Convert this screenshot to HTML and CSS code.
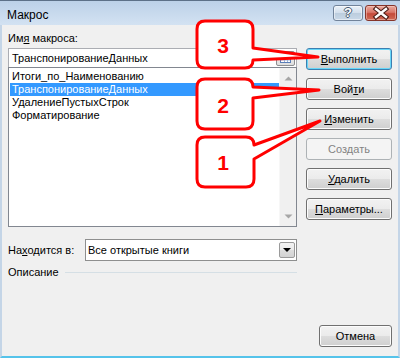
FILE: index.html
```html
<!DOCTYPE html>
<html lang="ru">
<head>
<meta charset="utf-8">
<title>Макрос</title>
<link rel="stylesheet" href="styles.css">
</head>
<body>
<div class="window">
  <div class="titlebar">
    <span class="title">Макрос</span>
    <div class="caption-btns">
      <span class="cbtn help">?</span>
      <span class="cbtn close">
        <svg width="32" height="16" viewBox="0 0 32 16">
          <path d="M11 4 L21 12 M21 4 L11 12" stroke="#4a1d17" stroke-width="4.6" stroke-linecap="square" fill="none"/>
          <path d="M11 4 L21 12 M21 4 L11 12" stroke="#ffffff" stroke-width="2.4" stroke-linecap="square" fill="none"/>
        </svg>
      </span>
    </div>
  </div>
  <div class="client">
    <div class="main">
      <div class="left">
        <div class="label">Им<u>я</u> макроса:</div>
        <div class="namebox">
          <span>ТранспонированиеДанных</span>
          <span class="refedit">
            <svg width="17" height="13" viewBox="0 0 17 13">
              <rect x="3.5" y="3.5" width="10" height="7" fill="#ffffff" stroke="#5a7fb8"/>
              <rect x="4" y="4" width="9" height="2" fill="#4d7cc4"/>
              <path d="M4 8 H13 M7.5 6 V10 M10.5 6 V10" stroke="#9fb4d6" stroke-width="1"/>
            </svg>
          </span>
        </div>
        <div class="list">
          <div class="items">
            <div class="item">Итоги_по_Наименованию</div>
            <div class="item sel">ТранспонированиеДанных</div>
            <div class="item">УдалениеПустыхСтрок</div>
            <div class="item">Форматирование</div>
          </div>
          <div class="vscroll">
            <svg width="9" height="5" viewBox="0 0 9 5"><path d="M0.5 4.5 L4.5 0.5 L8.5 4.5 Z" fill="#a6a6a6"/></svg>
            <svg width="9" height="5" viewBox="0 0 9 5"><path d="M0.5 0.5 L4.5 4.5 L8.5 0.5 Z" fill="#a6a6a6"/></svg>
          </div>
        </div>
        <div class="where">
          <span class="where-label">На<u>х</u>одится в:</span>
          <div class="combo">
            <span>Все открытые книги</span>
            <span class="dd">
              <svg width="8" height="4" viewBox="0 0 8 4"><path d="M0 0 H8 L4 4 Z" fill="#000000"/></svg>
            </span>
          </div>
        </div>
        <div class="desc">
          <span>Описание</span>
          <span class="rule"></span>
        </div>
      </div>
      <div class="buttons">
        <button class="btn default"><u>В</u>ыполнить</button>
        <button class="btn">Вой<u>т</u>и</button>
        <button class="btn"><u>И</u>зменить</button>
        <button class="btn disabled">Создать</button>
        <button class="btn"><u>У</u>далить</button>
        <button class="btn"><u>П</u>араметры...</button>
      </div>
    </div>
    <div class="footer">
      <button class="btn cancel">Отмена</button>
    </div>
  </div>

  <svg class="callouts" width="400" height="358" viewBox="0 0 400 358">
    <g fill="#ffffff" stroke="#ff0000" stroke-width="3" stroke-linejoin="round">
      <path d="M205 21 H245 Q253 21 253 29 V48 L318 57 L253 60 Q253 68 245 68 H205 Q197 68 197 60 V29 Q197 21 205 21 Z"/>
      <path d="M205 79 H245 Q253 79 253 87 L319 90 L253 98 V121 Q253 129 245 129 H205 Q197 129 197 121 V87 Q197 79 205 79 Z"/>
      <path d="M205 137 H246 Q254 137 254 145 L320 121 L254 159 V179 Q254 187 246 187 H205 Q197 187 197 179 V145 Q197 137 205 137 Z"/>
    </g>
    <g class="num" fill="#ff0000" text-anchor="middle">
      <text x="223" y="52.5">3</text>
      <text x="223" y="112.5">2</text>
      <text x="223" y="169.5">1</text>
    </g>
  </svg>
</div>
</body>
</html>
```

FILE: styles.css
```css
* {
  box-sizing: border-box;
}

html,
body {
  margin: 0;
  padding: 0;
}

body {
  width: 400px;
  height: 358px;
  overflow: hidden;
  font-family: "Liberation Sans", Arial, sans-serif;
  font-size: 11px;
  color: #000;
  background: #ffffff;
}

.window {
  position: relative;
  width: 400px;
  height: 358px;
  display: flex;
  flex-direction: column;
}

/* ---------- title bar ---------- */
.titlebar {
  height: 25px;
  flex: none;
  display: flex;
  align-items: flex-start;
  justify-content: space-between;
  padding: 0 3px 0 7px;
  border-top: 1px solid #5d7188;
  background: linear-gradient(#bcd1e8, #d3e2f2);
}

.title {
  font-size: 12px;
  line-height: 15px;
  margin-top: 7px;
}

.caption-btns {
  display: flex;
  gap: 2px;
  margin-top: 4px;
}

.cbtn {
  height: 16px;
  border-radius: 3px;
  display: flex;
  align-items: center;
  justify-content: center;
}

.help {
  width: 30px;
  border: 1px solid #71839a;
  background: linear-gradient(#eaf1f8 0%, #d3dfec 48%, #bccdde 52%, #c9d8e8 100%);
  box-shadow: inset 0 0 0 1px rgba(255, 255, 255, 0.5);
  color: #ffffff;
  font-weight: bold;
  font-size: 13px;
  line-height: 14px;
  text-shadow: 1px 0 0 #46586e, -1px 0 0 #46586e, 0 1px 0 #46586e, 0 -1px 0 #46586e;
}

.close {
  width: 32px;
  border: 1px solid #86352b;
  background: linear-gradient(#e9a99c 0%, #d9776a 45%, #c44a3a 55%, #cf6a56 100%);
  box-shadow: inset 0 0 0 1px rgba(255, 220, 210, 0.45);
}

.close svg {
  display: block;
  margin: -1px;
}

/* ---------- client area ---------- */
.client {
  flex: 1;
  display: flex;
  flex-direction: column;
  background: #f0f0f0;
  border-left: 2px solid #c4d5e7;
  border-right: 2px solid #c4d5e7;
  border-bottom: 2px solid #55c3ea;
  padding: 6px 6px 9px 6px;
}

.main {
  display: flex;
  gap: 9px;
}

.left {
  width: 289px;
}

.label {
  height: 15px;
  line-height: 15px;
  margin-bottom: 2px;
}

.namebox {
  height: 20px;
  border: 1px solid #abadb3;
  background: #ffffff;
  display: flex;
  align-items: center;
  justify-content: space-between;
  padding-left: 3px;
}

.refedit {
  width: 19px;
  height: 15px;
  margin-right: 1px;
  border: 1px solid #8d8f92;
  border-radius: 2px;
  background: linear-gradient(#f6f6f6, #dedede);
  display: flex;
  align-items: center;
  justify-content: center;
}

.refedit svg {
  display: block;
}

.list {
  height: 160px;
  margin-top: -1px;
  border: 1px solid #828790;
  background: #ffffff;
  display: flex;
}

.items {
  flex: 1;
  padding: 2px 0 0 1px;
}

.item {
  height: 13px;
  line-height: 13px;
  padding-left: 2px;
  white-space: nowrap;
}

.item.sel {
  background: #3399ff;
  color: #ffffff;
}

.vscroll {
  width: 17px;
  background: #f0f0f0;
  border-left: 1px solid #f7f7f7;
  display: flex;
  flex-direction: column;
  align-items: center;
  justify-content: space-between;
  padding: 8px 0 7px;
}

.vscroll svg {
  display: block;
}

.where {
  display: flex;
  align-items: center;
  margin-top: 12px;
}

.where-label {
  width: 77px;
  line-height: 15px;
}

.combo {
  width: 212px;
  height: 22px;
  border: 1px solid #8e8f8f;
  background: #ffffff;
  display: flex;
  align-items: center;
  justify-content: space-between;
  padding-left: 2px;
}

.dd {
  width: 16px;
  height: 16px;
  margin-right: 1px;
  border: 1px solid #9a9a9a;
  border-radius: 2px;
  background: linear-gradient(#f3f3f3 0%, #ebebeb 50%, #dddddd 51%, #d3d3d3 100%);
  display: flex;
  align-items: center;
  justify-content: center;
}

.dd svg {
  display: block;
}

.desc {
  display: flex;
  align-items: center;
  margin-top: 4px;
  line-height: 15px;
}

.rule {
  flex: 1;
  height: 1px;
  margin-left: 6px;
  background: #d5dfe5;
}

/* ---------- buttons ---------- */
.buttons {
  width: 86px;
  display: flex;
  flex-direction: column;
  gap: 8px;
  padding-top: 17px;
}

.btn {
  width: 86px;
  height: 22px;
  padding: 0;
  font-family: inherit;
  font-size: inherit;
  line-height: 20px;
  color: #000000;
  text-align: center;
  border: 1px solid #707070;
  border-radius: 3px;
  background: linear-gradient(#f2f2f2 0%, #ebebeb 50%, #dddddd 51%, #cfcfcf 100%);
  box-shadow: inset 0 0 0 1px #fcfcfc;
}

.btn.default {
  border-color: #3c7fb1;
  box-shadow: inset 0 0 0 1px #66d6f8;
}

.btn.disabled {
  border-color: #adb2b5;
  background: #f4f4f4;
  box-shadow: none;
  color: #838383;
}

.footer {
  margin-top: auto;
  display: flex;
  justify-content: flex-end;
}

.btn.cancel {
  width: 73px;
}

/* ---------- callouts overlay ---------- */
.callouts {
  position: absolute;
  top: 0;
  left: 0;
  pointer-events: none;
}

.num {
  font-family: "Liberation Sans", sans-serif;
  font-weight: bold;
  font-size: 21px;
}
```
